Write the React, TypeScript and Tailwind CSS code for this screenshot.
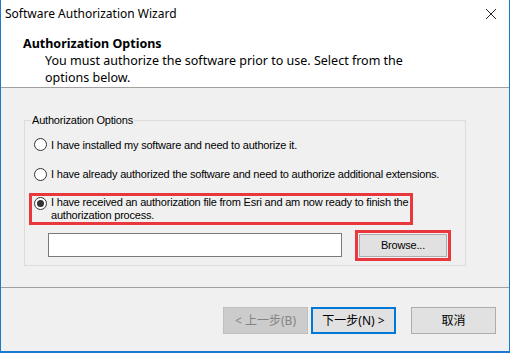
import React from 'react';

const Radio = ({ checked }: { checked?: boolean }) => (
  <span className="flex h-[13px] w-[13px] shrink-0 items-center justify-center rounded-full border border-[#333] bg-white">
    {checked && <span className="h-[7px] w-[7px] rounded-full bg-[#333]" />}
  </span>
);

const App = () => {
  return (
    <div className="h-[353px] w-[510px] overflow-hidden bg-white font-['Noto_Sans','Noto_Sans_CJK_SC',sans-serif] text-[#000]">
      <div className="flex h-full flex-col border-x border-b-2 border-x-[#1a7ad0] border-b-[#1a7ad0]">
        {/* title bar */}
        <div className="flex h-[27px] items-center justify-between pl-[4px] pr-[12px] text-[12px]">
          <span>Software Authorization Wizard</span>
          <svg width="12" height="12" viewBox="0 0 12 12" stroke="#222" strokeWidth="1">
            <path d="M1 1l10 10M11 1L1 11" />
          </svg>
        </div>

        {/* header */}
        <div className="h-[61px] border-b border-[#a0a0a0] pl-[22px] text-[12.5px] leading-[17px]">
          <div className="pt-[8px] font-bold">Authorization Options</div>
          <div className="w-[385px] pl-[22px]">
            You must authorize the software prior to use. Select from the options below.
          </div>
        </div>

        {/* body */}
        <div className="flex-1 bg-[#f0f0f0] px-[23px] pt-[24px] font-['Liberation_Sans',sans-serif] text-[11px] tracking-[-0.2px]">
          <fieldset className="h-[154px] w-[442px] border border-[#dcdcdc] px-[9px]">
            <legend className="-ml-[3px] px-[1px] text-[11px]">Authorization Options</legend>
            <div className="mt-[8px] flex items-center gap-[4px]">
              <Radio />
              <span>I have installed my software and need to authorize it.</span>
            </div>
            <div className="mt-[13px] flex items-center gap-[4px]">
              <Radio />
              <span>I have already authorized the software and need to authorize additional extensions.</span>
            </div>
            <div className="-ml-[5px] mt-[10px] flex h-[32px] w-[384px] items-start gap-[4px] border-[3px] border-[#e8373d] pl-[2px] leading-[13px]">
              <span className="mt-[1px]">
                <Radio checked />
              </span>
              <span>I have received an authorization file from Esri and am now ready to finish the authorization process.</span>
            </div>
            <div className="ml-[14px] mt-[5px] flex items-center gap-[13px]">
              <div className="h-[24px] w-[294px] border border-[#7a7a7a] bg-white" />
              <div className="border-[3px] border-[#e8373d] p-[1px]">
                <button className="h-[23px] w-[88px] border border-[#adadad] bg-[#e1e1e1] text-[11px]">Browse...</button>
              </div>
            </div>
          </fieldset>
        </div>

        {/* footer */}
        <div className="flex h-[64px] items-start justify-end border-t border-[#a0a0a0] bg-[#f0f0f0] pr-[13px] pt-[19px] text-[12px]">
          <button className="h-[27px] w-[85px] border border-[#bfbfbf] bg-[#cccccc] text-[#838383]">&lt; 上一步(B)</button>
          <button className="ml-[3px] h-[27px] w-[85px] border-2 border-[#0078d7] bg-[#e1e1e1]">下一步(N) &gt;</button>
          <button className="ml-[15px] h-[27px] w-[85px] border border-[#adadad] bg-[#e1e1e1]">取消</button>
        </div>
      </div>
    </div>
  );
};

export default App;
